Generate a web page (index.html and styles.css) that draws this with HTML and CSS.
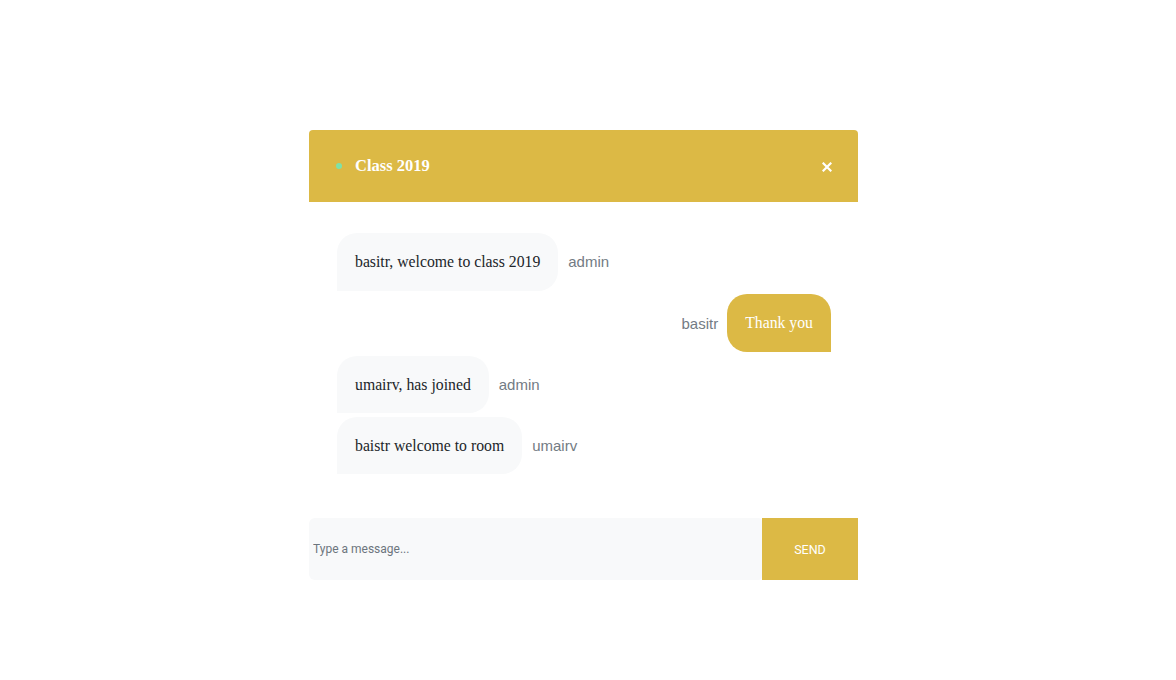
FILE: index.html
```html
<!DOCTYPE html>
<html>
<head>
<meta charset="utf-8">
<link rel="stylesheet" href="styles.css">
</head>
<body>
<div class="chat">
  <div class="chat-header">
    <div class="title">
      <span class="dot"></span>
      <span class="room">Class 2019</span>
    </div>
    <span class="close">
      <svg width="10" height="10" viewBox="0 0 10 10"><path d="M1.5 1.5 L8.5 8.5 M8.5 1.5 L1.5 8.5" stroke="#fff" stroke-width="2.2" stroke-linecap="square"/></svg>
    </span>
  </div>
  <div class="messages">
    <div class="msg other"><div class="bubble">basitr, welcome to class 2019</div><span class="name">admin</span></div>
    <div class="msg mine"><span class="name">basitr</span><div class="bubble">Thank you</div></div>
    <div class="msg other"><div class="bubble">umairv, has joined</div><span class="name">admin</span></div>
    <div class="msg other"><div class="bubble">baistr welcome to room</div><span class="name">umairv</span></div>
  </div>
  <form class="composer">
    <input class="input" type="text" placeholder="Type a message...">
    <button class="send" type="button">SEND</button>
  </form>
</div>
</body>
</html>
```
FILE: styles.css
```css
html, body {
  margin: 0;
  padding: 0;
  background: #fff;
}
.chat {
  width: 549px;
  margin: 130px 0 0 309px;
  font-family: "Liberation Serif", "Times New Roman", serif;
}
.chat-header {
  height: 72px;
  background: #dcb945;
  border-radius: 4px 4px 0 0;
  display: flex;
  align-items: center;
  justify-content: space-between;
  padding: 0 26px 0 27px;
  box-sizing: border-box;
}
.title {
  display: flex;
  align-items: center;
}
.dot {
  width: 6px;
  height: 6px;
  border-radius: 50%;
  background: #7ee2a8;
  margin-right: 13px;
}
.room {
  color: #fff;
  font-weight: bold;
  font-size: 16.5px;
}
.close {
  display: flex;
  align-items: center;
  margin-top: 2px;
}
.messages {
  padding: 31px 27px 44px 28px;
  display: flex;
  flex-direction: column;
  gap: 3.75px;
}
.msg {
  display: flex;
  align-items: center;
}
.msg.mine {
  justify-content: flex-end;
}
.bubble {
  font-size: 15.75px;
  line-height: 23.5px;
  padding: 17px 18px;
  color: #212529;
  background: #f8f9fa;
  border-radius: 20px 20px 20px 0;
}
.mine .bubble {
  background: #dcb945;
  color: #fff;
  border-radius: 20px 20px 0 20px;
}
.name {
  font-family: "Liberation Sans", Arial, sans-serif;
  font-size: 15px;
  color: #737b84;
  margin: 0 10px;
}
.mine .name {
  margin: 0 9px 0 0;
}
.composer {
  display: flex;
  height: 62px;
  margin: 0;
}
.input {
  flex: 1;
  border: none;
  outline: none;
  background: #f8f9fa;
  border-radius: 6px 4px 4px 6px;
  padding: 0 4px;
  font-family: Roboto, "Liberation Sans", sans-serif;
  font-size: 12px;
  color: #495057;
}
.input::placeholder {
  color: #6c757d;
}
.send {
  width: 96px;
  border: none;
  background: #dcb945;
  color: #fff;
  font-family: Roboto, "Liberation Sans", sans-serif;
  font-size: 12.5px;
  padding: 0;
}
```
